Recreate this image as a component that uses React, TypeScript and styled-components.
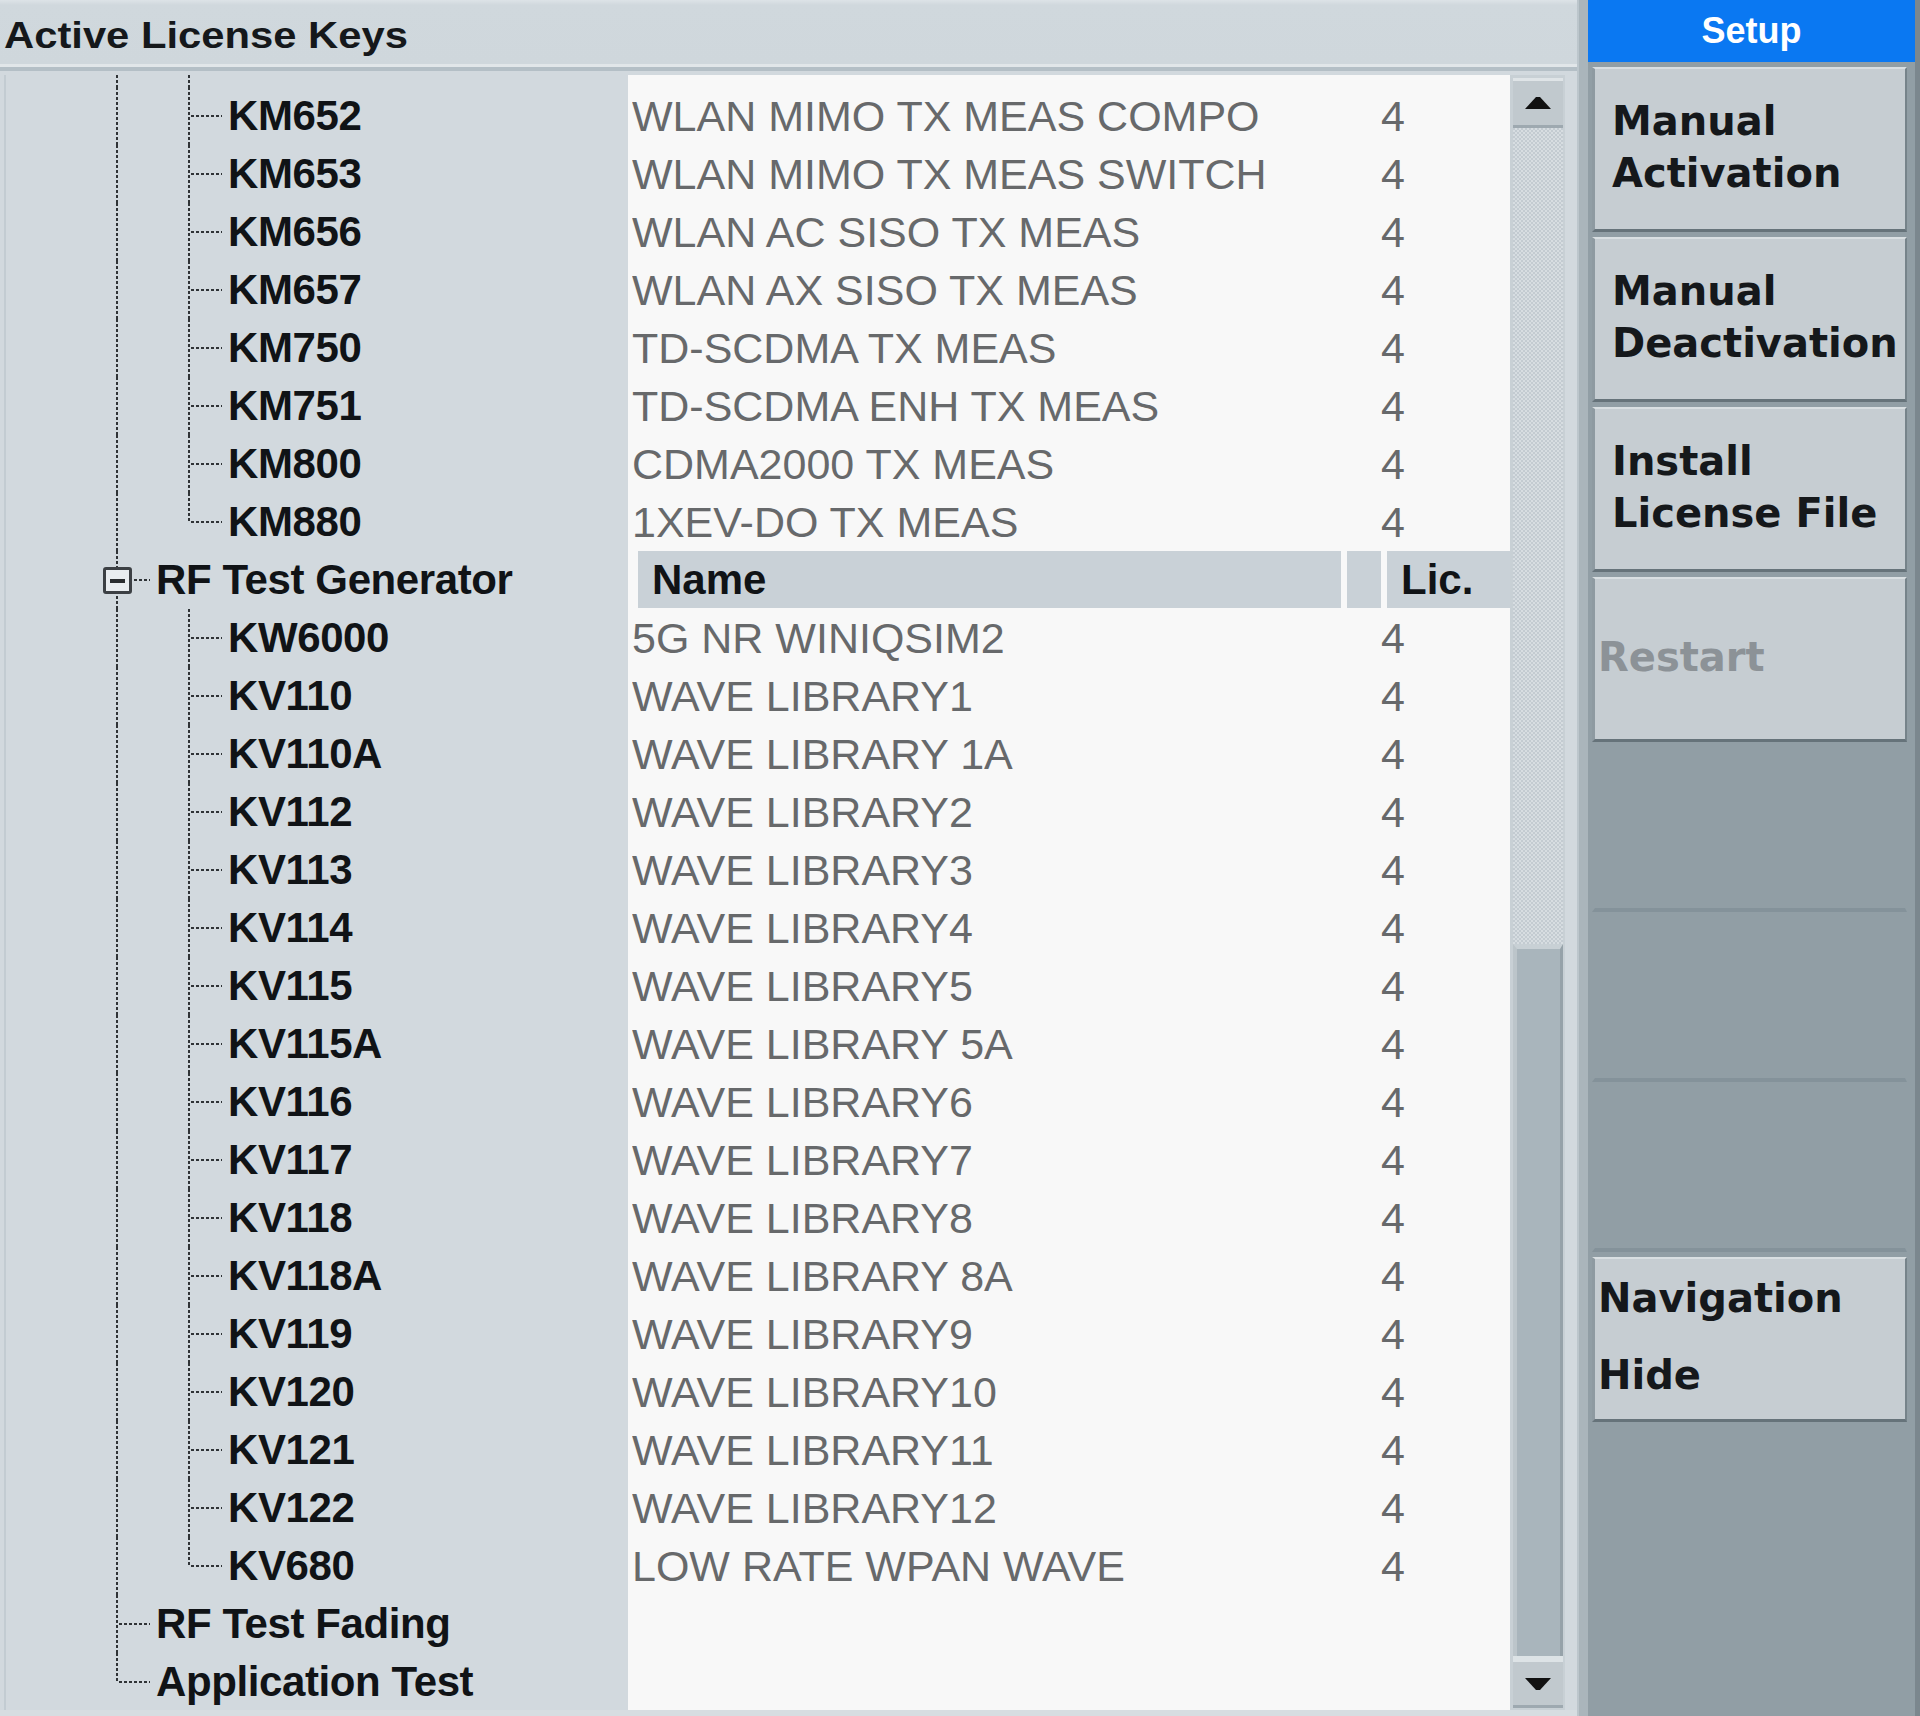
import React from 'react'
import styled, { createGlobalStyle } from 'styled-components'

type GuideKind = 'pass' | 'tee' | 'end'

type TreeItem = {
  label: string
  depth: 1 | 2
  guides: GuideKind[]
  expander?: boolean
  name?: string
  lic?: string
  header?: boolean
}

const kmKeys: [string, string][] = [
  ['KM652', 'WLAN MIMO TX MEAS COMPO'],
  ['KM653', 'WLAN MIMO TX MEAS SWITCH'],
  ['KM656', 'WLAN AC SISO TX MEAS'],
  ['KM657', 'WLAN AX SISO TX MEAS'],
  ['KM750', 'TD-SCDMA TX MEAS'],
  ['KM751', 'TD-SCDMA ENH TX MEAS'],
  ['KM800', 'CDMA2000 TX MEAS'],
  ['KM880', '1XEV-DO TX MEAS'],
]

const kvKeys: [string, string][] = [
  ['KW6000', '5G NR WINIQSIM2'],
  ['KV110', 'WAVE LIBRARY1'],
  ['KV110A', 'WAVE LIBRARY 1A'],
  ['KV112', 'WAVE LIBRARY2'],
  ['KV113', 'WAVE LIBRARY3'],
  ['KV114', 'WAVE LIBRARY4'],
  ['KV115', 'WAVE LIBRARY5'],
  ['KV115A', 'WAVE LIBRARY 5A'],
  ['KV116', 'WAVE LIBRARY6'],
  ['KV117', 'WAVE LIBRARY7'],
  ['KV118', 'WAVE LIBRARY8'],
  ['KV118A', 'WAVE LIBRARY 8A'],
  ['KV119', 'WAVE LIBRARY9'],
  ['KV120', 'WAVE LIBRARY10'],
  ['KV121', 'WAVE LIBRARY11'],
  ['KV122', 'WAVE LIBRARY12'],
  ['KV680', 'LOW RATE WPAN WAVE'],
]

const leaves = (list: [string, string][]): TreeItem[] =>
  list.map(([label, name], i) => ({
    label,
    name,
    lic: '4',
    depth: 2,
    guides: ['pass', i === list.length - 1 ? 'end' : 'tee'],
  }))

const items: TreeItem[] = [
  ...leaves(kmKeys),
  { label: 'RF Test Generator', depth: 1, guides: ['tee'], expander: true, header: true },
  ...leaves(kvKeys),
  { label: 'RF Test Fading', depth: 1, guides: ['tee'] },
  { label: 'Application Test', depth: 1, guides: ['end'] },
]

const softKeys = [
  { lines: ['Manual', 'Activation'] },
  { lines: ['Manual', 'Deactivation'] },
  { lines: ['Install', 'License File'] },
  { lines: ['Restart'], disabled: true, tight: true },
  { lines: [] },
  { lines: [] },
  { lines: [] },
  { lines: ['Navigation', 'Hide'], tight: true, spread: true },
]

const THUMB_HEIGHT = 712

const GlobalStyle = createGlobalStyle`
  html, body {
    margin: 0;
    padding: 0;
  }
  body {
    width: 1920px;
    height: 1716px;
    overflow: hidden;
    background: #d2d9de;
    font-family: 'Liberation Sans', Arial, sans-serif;
  }
`

const ROW = 58
const dot = '#2f3336'

const App: React.FC = () => {
  return (
    <>
      <GlobalStyle />
      <Screen>
        <LeftPane>
          <TitleBar>
            <Title>Active License Keys</Title>
          </TitleBar>
          <Rule />
          <Body>
            <TreeColumn>
              <TreeStub>
                <Guide $kind="pass" />
                <Guide $kind="pass" />
              </TreeStub>
              {items.map((item) => (
                <TreeRow key={item.label}>
                  {item.guides.map((g, i) => (
                    <Guide key={i} $kind={g}>
                      {item.expander && i === 0 && <Expander />}
                    </Guide>
                  ))}
                  <Label>{item.label}</Label>
                </TreeRow>
              ))}
            </TreeColumn>

            <TableColumn>
              <TableStub />
              {items.map((item) =>
                item.header ? (
                  <HeaderRow key={item.label}>
                    <NameHead>Name</NameHead>
                    <SpacerHead />
                    <LicHead>Lic.</LicHead>
                  </HeaderRow>
                ) : (
                  <TableRow key={item.label}>
                    <Cell>{item.name}</Cell>
                    <Cell>{item.lic}</Cell>
                  </TableRow>
                )
              )}
            </TableColumn>

            <ScrollBar>
              <ScrollButton>
                <svg width="26" height="12" viewBox="0 0 26 12">
                  <polygon points="0,12 11,0 15,0 26,12" fill="#111" />
                </svg>
              </ScrollButton>
              <Track>
                <Thumb style={{ height: THUMB_HEIGHT }} />
              </Track>
              <ScrollButton $down>
                <svg width="26" height="12" viewBox="0 0 26 12">
                  <polygon points="0,0 26,0 15,12 11,12" fill="#111" />
                </svg>
              </ScrollButton>
            </ScrollBar>
          </Body>
        </LeftPane>

        <Band />

        <SidePanel>
          <PanelHeader>Setup</PanelHeader>
          <KeyList>
            {softKeys.map((k, i) => (
              <SoftKey
                key={i}
                $empty={k.lines.length === 0}
                $disabled={k.disabled}
                $tight={k.tight}
                $spread={k.spread}
              >
                {k.lines.map((line) => (
                  <span key={line}>{line}</span>
                ))}
              </SoftKey>
            ))}
          </KeyList>
        </SidePanel>
      </Screen>
    </>
  )
}

const Screen = styled.div`
  display: flex;
  width: 1920px;
  height: 1716px;
  overflow: hidden;
`

const LeftPane = styled.div`
  width: 1577px;
  display: flex;
  flex-direction: column;
  background: #d2d9de;
`

const TitleBar = styled.div`
  height: 67px;
  flex: none;
  box-sizing: border-box;
  padding: 8px 0 0 4px;
  background: linear-gradient(to bottom, #dde3e7 0, #d0d8dd 5px, #cfd7dc 100%);
  border-bottom: 3px solid #e1e6e9;
`

const Title = styled.span`
  display: inline-block;
  font-size: 36px;
  line-height: 56px;
  font-weight: 700;
  color: #15181b;
  transform: scaleX(1.16);
  transform-origin: left center;
`

const Rule = styled.div`
  height: 4px;
  flex: none;
  background: #b4bfc6;
`

const Body = styled.div`
  flex: 1;
  min-height: 0;
  display: flex;
  padding: 4px 12px 0 4px;
  border-bottom: 6px solid #d7dde1;
`

const TreeColumn = styled.div`
  width: 624px;
  flex: none;
  overflow: hidden;
  padding-left: 76px;
  box-sizing: border-box;
  background: #d2d9de;
  box-shadow: inset 2px 0 0 #c3ccd2;
`

const TreeRow = styled.div`
  display: flex;
  height: ${ROW}px;
`

const TreeStub = styled(TreeRow)`
  height: 12px;
`

const Guide = styled.span<{ $kind: GuideKind }>`
  position: relative;
  flex: none;
  width: 72px;

  &::before {
    content: '';
    position: absolute;
    left: 36px;
    top: 0;
    width: 2px;
    height: ${(p) => (p.$kind === 'end' ? '30px' : '100%')};
    background: repeating-linear-gradient(to bottom, ${dot} 0 3px, transparent 3px 5px);
  }

  &::after {
    content: '';
    display: ${(p) => (p.$kind === 'pass' ? 'none' : 'block')};
    position: absolute;
    left: 39px;
    right: 2px;
    top: 28px;
    height: 2px;
    background: repeating-linear-gradient(to right, ${dot} 0 3px, transparent 3px 5px);
  }
`

const Expander = styled.span`
  position: absolute;
  z-index: 1;
  left: 23px;
  top: 16px;
  width: 29px;
  height: 27px;
  box-sizing: border-box;
  border: 3px solid #3c4044;
  border-radius: 3px;
  background: #e9edf0;
  display: flex;
  align-items: center;
  justify-content: center;

  &::after {
    content: '';
    width: 15px;
    height: 4px;
    background: #2a2d30;
  }
`

const Label = styled.span`
  margin-left: 4px;
  font-size: 42px;
  font-weight: 700;
  line-height: ${ROW}px;
  letter-spacing: -0.4px;
  color: #101316;
  white-space: nowrap;
`

const TableColumn = styled.div`
  width: 882px;
  flex: none;
  overflow: hidden;
  background: #f8f8f8;
`

const TableStub = styled.div`
  height: 12px;
`

const TableRow = styled.div`
  display: grid;
  grid-template-columns: 749px 1fr;
  height: ${ROW}px;
  padding-left: 4px;
  font-size: 43px;
  line-height: ${ROW}px;
  color: #67696b;
  white-space: nowrap;
`

const Cell = styled.span`
  overflow: hidden;
`

const HeaderRow = styled.div`
  display: flex;
  gap: 6px;
  height: ${ROW}px;
  box-sizing: border-box;
  padding: 0 0 1px 10px;
  font-size: 42px;
  font-weight: 700;
  line-height: 57px;
  color: #101316;
`

const NameHead = styled.div`
  width: 703px;
  flex: none;
  padding-left: 14px;
  box-sizing: border-box;
  background: #c9d1d7;
`

const SpacerHead = styled.div`
  width: 34px;
  flex: none;
  background: #c9d1d7;
`

const LicHead = styled.div`
  flex: 1;
  padding-left: 14px;
  background: #c9d1d7;
`

const ScrollBar = styled.div`
  width: 55px;
  flex: none;
  display: flex;
  flex-direction: column;
  box-sizing: border-box;
  padding: 3px 2px 2px 3px;
  background: #c8d0d5;
`

const ScrollButton = styled.div<{ $down?: boolean }>`
  height: ${(p) => (p.$down ? 52 : 50)}px;
  flex: none;
  box-sizing: border-box;
  display: flex;
  align-items: center;
  justify-content: center;
  background: #c1c9ce;
  border-top: ${(p) => (p.$down ? '6px solid #dde3e6' : '3px solid #dfe4e7')};
  border-bottom: 3px solid #9ea9b0;
`

const Track = styled.div`
  flex: 1;
  display: flex;
  flex-direction: column;
  justify-content: flex-end;
  background: repeating-conic-gradient(#d7dde1 0 25%, #c3cbd1 0 50%) 0 0 / 4px 4px;
`

const Thumb = styled.div`
  box-sizing: border-box;
  background: #a9b5bc;
  border-top: 5px solid #c8d0d5;
  border-left: 4px solid #bcc5ca;
  border-right: 3px solid #96a2a9;
`

const Band = styled.div`
  width: 9px;
  flex: none;
  background: #aab5bb;
  border-left: 2px solid #bcc6cc;
`

const SidePanel = styled.div`
  flex: 1;
  display: flex;
  flex-direction: column;
  background: #919ea5;
  border-right: 5px solid #7b878e;
`

const PanelHeader = styled.div`
  height: 62px;
  flex: none;
  background: #0a78f2;
  color: #fff;
  text-align: center;
  font-size: 36px;
  font-weight: 700;
  line-height: 62px;
`

const KeyList = styled.div`
  display: flex;
  flex-direction: column;
  padding: 0 8px 0 4px;
`

const SoftKey = styled.div<{
  $empty?: boolean
  $disabled?: boolean
  $tight?: boolean
  $spread?: boolean
}>`
  height: 165px;
  margin-top: 5px;
  box-sizing: border-box;
  display: flex;
  flex-direction: column;
  justify-content: center;
  padding: 0 0 4px ${(p) => (p.$tight ? 3 : 17)}px;
  font-family: 'DejaVu Sans', Verdana, sans-serif;
  font-size: 40px;
  font-weight: 700;
  line-height: ${(p) => (p.$spread ? 77 : 52)}px;
  white-space: nowrap;
  color: ${(p) => (p.$disabled ? '#8c9297' : '#15181b')};
  background: ${(p) => (p.$empty ? 'transparent' : '#c6cdd2')};
  border-top: 2px solid ${(p) => (p.$empty ? 'transparent' : '#d9dfe2')};
  border-left: 3px solid ${(p) => (p.$empty ? 'transparent' : '#8e9aa1')};
  border-right: 2px solid ${(p) => (p.$empty ? 'transparent' : '#76838a')};
  border-bottom: ${(p) => (p.$empty ? '4px solid #84929a' : '3px solid #66737a')};
`

export default App
